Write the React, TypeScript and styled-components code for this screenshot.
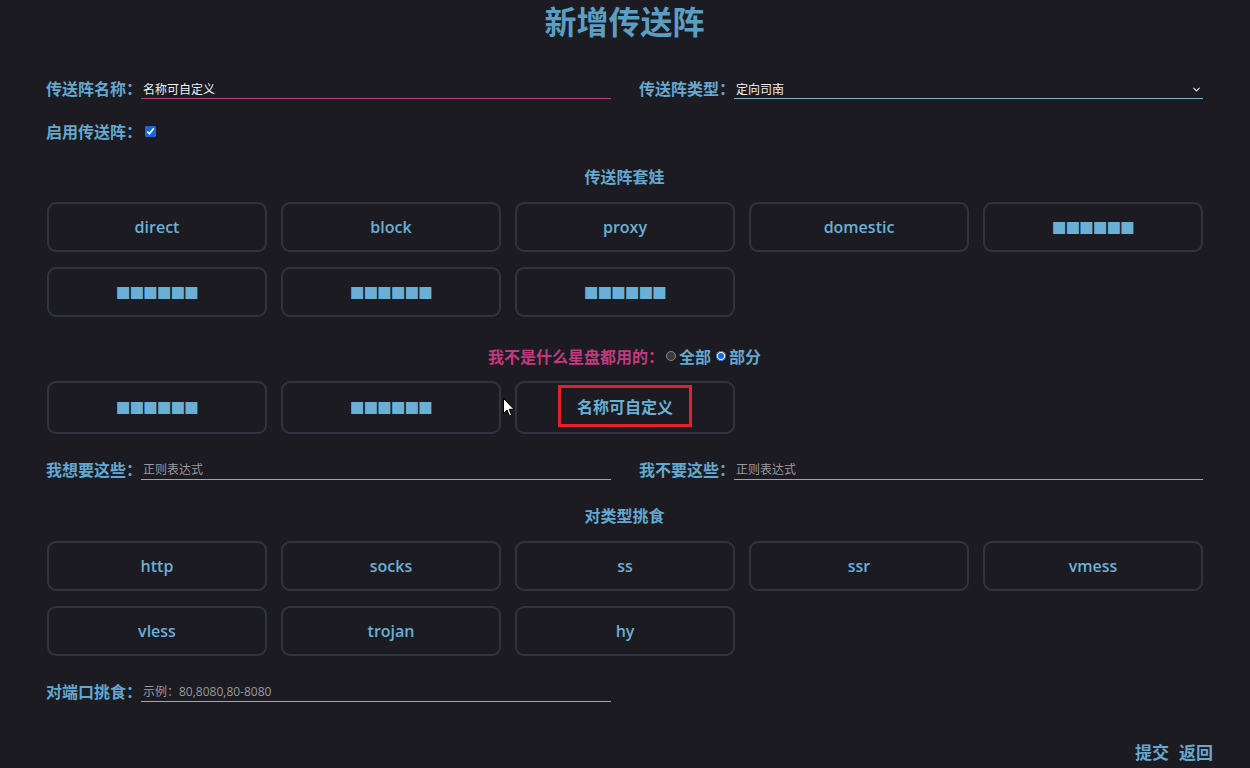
import React from "react";
import styled, { createGlobalStyle } from "styled-components";
import { ChevronDown } from "lucide-react";

const GlobalStyle = createGlobalStyle`
  html, body { margin: 0; padding: 0; background: #1c1b21; color-scheme: dark; }
  body { font-family: "Noto Sans CJK SC", "Noto Sans", sans-serif; }
  * { box-sizing: border-box; }
`;

const BLUE = "#64a8cf";
const CJK = `"Noto Sans CJK SC", "Noto Sans", sans-serif`;

const Page = styled.div`
  position: relative;
  width: 1250px;
  height: 768px;
  padding: 0 47px 0 46px;
  display: flex;
  flex-direction: column;
  overflow: hidden;
`;

const Title = styled.h1`
  margin: 0;
  height: 40px;
  padding-top: 2px;
  line-height: 36px;
  text-align: center;
  font-family: ${CJK};
  font-size: 32px;
  font-weight: 700;
  color: #5b9ec4;
`;

const Section = styled.div<{ $mt: number }>`
  margin-top: ${(p) => p.$mt}px;
`;

const TwoCols = styled.div`
  display: grid;
  grid-template-columns: 565px 564px;
  column-gap: 28px;
`;

const Field = styled.label`
  display: flex;
  align-items: center;
  height: 24px;
`;

const Label = styled.span<{ $color?: string; $auto?: boolean }>`
  flex: 0 0 auto;
  width: ${(p) => (p.$auto ? "auto" : "95px")};
  font-family: ${CJK};
  font-size: 16px;
  font-weight: 700;
  line-height: 24px;
  color: ${(p) => p.$color || BLUE};
  white-space: nowrap;
`;

const TextInput = styled.input<{ $line?: string }>`
  flex: 1;
  height: 19px;
  margin-top: 2px;
  padding: 0 2px;
  border: none;
  border-bottom: 1px solid ${(p) => p.$line || "#7db2cf"};
  background: transparent;
  color: #f2f2f2;
  font-family: "Open Sans", ${CJK};
  font-size: 12px;
  outline: none;
  &::placeholder { color: #9a9a9f; }
`;

const SelectWrap = styled.div`
  position: relative;
  flex: 1;
  display: flex;
`;

const Select = styled.select`
  appearance: none;
  flex: 1;
  height: 19px;
  margin-top: 2px;
  padding: 0 2px;
  border: none;
  border-bottom: 1px solid #7db2cf;
  background: transparent;
  color: #f2f2f2;
  font-family: ${CJK};
  font-size: 12px;
  outline: none;
`;

const Chevron = styled(ChevronDown)`
  position: absolute;
  right: 1px;
  top: 6px;
  color: #e8e8e8;
  pointer-events: none;
`;

const Check = styled.input`
  margin: 0 0 0 4px;
  width: 11px;
  height: 11px;
  accent-color: #1766e0;
`;

const Heading = styled.h2`
  margin: 0;
  height: 24px;
  line-height: 24px;
  text-align: center;
  font-family: ${CJK};
  font-size: 16px;
  font-weight: 700;
  color: ${BLUE};
`;

const ButtonGrid = styled.div`
  display: grid;
  grid-template-columns: repeat(5, 1fr);
  column-gap: 14px;
  row-gap: 15px;
  margin-left: 1px;
`;

const Chip = styled.button<{ $h: number }>`
  height: ${(p) => p.$h}px;
  border: 2px solid #2f3540;
  border-radius: 9px;
  background: transparent;
  color: #6ab0d6;
  font-family: "Open Sans", ${CJK};
  font-size: 16px;
  font-weight: 600;
  display: flex;
  align-items: center;
  justify-content: center;
  padding: 0;
  cursor: pointer;
`;

const Blocks = styled.span`
  font-family: "DejaVu Sans", sans-serif;
  font-size: 15.5px;
  letter-spacing: -1px;
  color: #6ab0d6;
  padding-bottom: 1px;
`;

const Highlight = styled.span`
  display: inline-flex;
  align-items: center;
  justify-content: center;
  width: 134px;
  height: 42px;
  margin-top: -4px;
  border: 3px solid #e3202b;
  font-family: ${CJK};
  font-weight: 700;
`;

const RadioLine = styled.div`
  display: flex;
  justify-content: center;
  align-items: center;
  height: 24px;
`;

const RadioOption = styled.label<{ $first?: boolean }>`
  display: inline-flex;
  align-items: center;
  font-family: ${CJK};
  font-size: 16px;
  font-weight: 700;
  color: ${BLUE};
  margin-left: ${(p) => (p.$first ? 2 : 5)}px;
`;

const Radio = styled.input`
  width: 10px;
  height: 10px;
  margin: 0 3px 0 0;
  accent-color: #1766e0;
`;

const Actions = styled.div`
  display: flex;
  justify-content: flex-end;
  gap: 10px;
  margin-right: -10px;
`;

const ActionLink = styled.a`
  font-family: ${CJK};
  font-size: 17px;
  font-weight: 700;
  line-height: 24px;
  color: ${BLUE};
  text-decoration: none;
  cursor: pointer;
`;

const Cursor = styled.svg`
  position: absolute;
  left: 503px;
  top: 398px;
`;

const BLK = "■■■■■■";

const nesting = ["direct", "block", "proxy", "domestic", BLK, BLK, BLK, BLK];
const types = ["http", "socks", "ss", "ssr", "vmess", "vless", "trojan", "hy"];

function ChipLabel({ text }: { text: string }) {
  return text === BLK ? <Blocks>{text}</Blocks> : <>{text}</>;
}

export default function App() {
  return (
    <>
      <GlobalStyle />
      <Page>
        <Title>新增传送阵</Title>

        <Section $mt={36}>
          <TwoCols>
            <Field>
              <Label>传送阵名称：</Label>
              <TextInput $line="#b8427f" defaultValue="名称可自定义" />
            </Field>
            <Field as="div">
              <Label>传送阵类型：</Label>
              <SelectWrap>
                <Select defaultValue="定向司南">
                  <option>定向司南</option>
                </Select>
                <Chevron size={11} strokeWidth={2.5} />
              </SelectWrap>
            </Field>
          </TwoCols>
        </Section>

        <Section $mt={19}>
          <Field>
            <Label>启用传送阵：</Label>
            <Check type="checkbox" defaultChecked />
          </Field>
        </Section>

        <Section $mt={21}>
          <Heading>传送阵套娃</Heading>
        </Section>

        <Section $mt={14}>
          <ButtonGrid>
            {nesting.map((t, i) => (
              <Chip key={i} $h={50}>
                <ChipLabel text={t} />
              </Chip>
            ))}
          </ButtonGrid>
        </Section>

        <Section $mt={27}>
          <RadioLine>
            <Label $color="#c23a80" $auto>
              我不是什么星盘都用的：
            </Label>
            <RadioOption $first>
              <Radio type="radio" name="scope" />
              全部
            </RadioOption>
            <RadioOption>
              <Radio type="radio" name="scope" defaultChecked />
              部分
            </RadioOption>
          </RadioLine>
        </Section>

        <Section $mt={13}>
          <ButtonGrid>
            <Chip $h={53}>
              <Blocks>{BLK}</Blocks>
            </Chip>
            <Chip $h={53}>
              <Blocks>{BLK}</Blocks>
            </Chip>
            <Chip $h={53}>
              <Highlight>名称可自定义</Highlight>
            </Chip>
          </ButtonGrid>
        </Section>

        <Section $mt={23}>
          <TwoCols>
            <Field>
              <Label>我想要这些：</Label>
              <TextInput placeholder="正则表达式" />
            </Field>
            <Field>
              <Label>我不要这些：</Label>
              <TextInput placeholder="正则表达式" />
            </Field>
          </TwoCols>
        </Section>

        <Section $mt={22}>
          <Heading>对类型挑食</Heading>
        </Section>

        <Section $mt={14}>
          <ButtonGrid>
            {types.map((t) => (
              <Chip key={t} $h={50}>
                {t}
              </Chip>
            ))}
          </ButtonGrid>
        </Section>

        <Section $mt={23}>
          <TwoCols>
            <Field>
              <Label>对端口挑食：</Label>
              <TextInput placeholder="示例：80,8080,80-8080" />
            </Field>
          </TwoCols>
        </Section>

        <Section $mt={37}>
          <Actions>
            <ActionLink>提交</ActionLink>
            <ActionLink>返回</ActionLink>
          </Actions>
        </Section>

        <Cursor width="12" height="19" viewBox="0 0 12 19">
          <path d="M0.5 0.5 L0.5 15.5 L4 12 L6.5 18 L8.6 17.1 L6.2 11.3 L11 11.3 Z" fill="#fff" stroke="#000" strokeWidth="1" />
        </Cursor>
      </Page>
    </>
  );
}
